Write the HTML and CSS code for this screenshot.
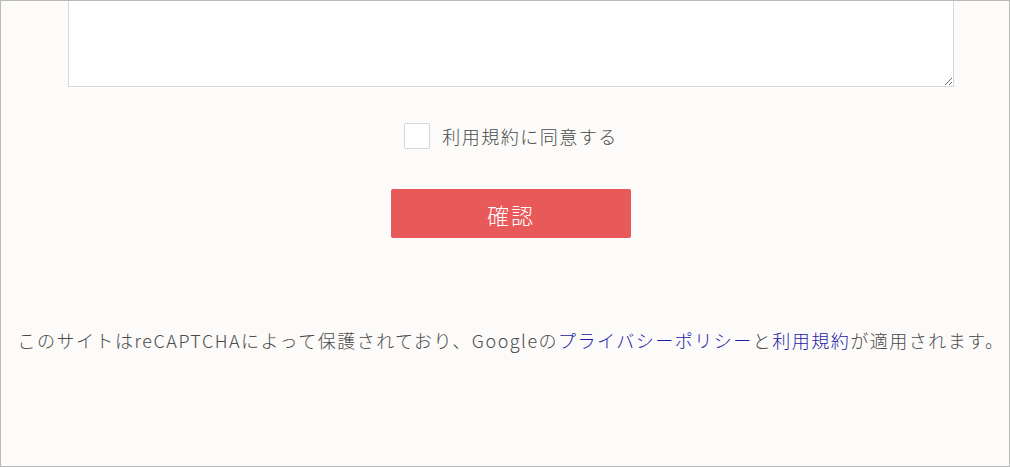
FILE: index.html
```html
<!DOCTYPE html>
<html lang="ja">
<head>
    <meta charset="UTF-8">
    <meta name="viewport" content="width=device-width, initial-scale=1.0">
    <title>お問い合わせ</title>
    <link rel="stylesheet" href="styles.css">
</head>
<body>
    <div class="page">
        <!-- Contact form (bottom part) -->
        <form class="contact">
            <textarea class="message" name="message"></textarea>

            <label class="agree">
                <input class="agree-box" type="checkbox" name="agree">
                <span>利用規約に同意する</span>
            </label>

            <button class="submit" type="button">確認</button>
        </form>

        <!-- reCAPTCHA notice -->
        <p class="recaptcha">このサイトはreCAPTCHAによって保護されており、Googleの<a href="#">プライバシーポリシー</a>と<a href="#">利用規約</a>が適用されます。</p>
    </div>
</body>
</html>
```

FILE: styles.css
```css
/* General styles */
* {
    box-sizing: border-box;
}

html, body {
    margin: 0;
    height: 100%;
}

body {
    font-family: "Noto Sans CJK JP", "Noto Sans", sans-serif;
    font-weight: 300;
    color: #4a4a4a;
}

.page {
    height: 467px;
    border: 1px solid #b9b9b9;
    background: #fcfbf9;
    overflow: hidden;
}

/* Form */
.contact {
    width: 886px;
    margin-left: 67px;
}

.message {
    display: block;
    width: 100%;
    height: 150px;
    margin-top: -64px;
    border: 1px solid #d9d8d6;
    background: #fff;
    resize: vertical;
}

.agree {
    display: flex;
    align-items: center;
    justify-content: center;
    gap: 12px;
    height: 26px;
    margin-top: 36px;
    font-size: 18px;
    letter-spacing: 1.5px;
    cursor: pointer;
}

.agree-box {
    appearance: none;
    width: 26px;
    height: 26px;
    margin: 0;
    border: 1px solid #d6d6d6;
    border-radius: 2px;
    background: #fff;
}

.submit {
    display: block;
    width: 240px;
    height: 49px;
    margin: 40px auto 0;
    border: none;
    border-radius: 2px;
    background: #e85a5a;
    color: #fff;
    font-family: inherit;
    font-weight: 300;
    font-size: 22px;
    letter-spacing: 2px;
    cursor: pointer;
}

/* reCAPTCHA notice */
.recaptcha {
    margin: 89px 0 0;
    padding-left: 12px;
    text-align: center;
    font-size: 18px;
    line-height: 27px;
    letter-spacing: 1.5px;
}

.recaptcha a {
    color: #1c1ca8;
    text-decoration: none;
}
```
